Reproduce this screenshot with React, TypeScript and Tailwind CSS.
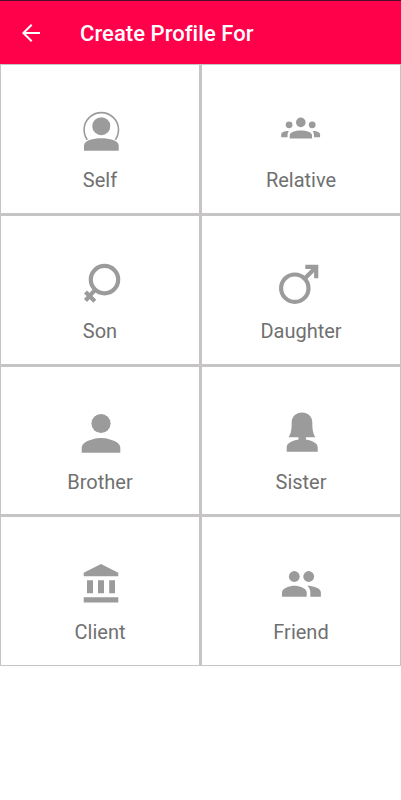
import React from 'react';

const iconProps = {
  className: 'h-10 w-10 overflow-visible text-[#9b9b9b]',
  viewBox: '0 0 40 40',
  fill: 'currentColor',
  'aria-hidden': true,
};

const SelfIcon = () => (
  <svg {...iconProps}>
    <circle cx="21.3" cy="18.8" r="17.2" fill="none" stroke="currentColor" strokeWidth="1.6" />
    <path d="M3 41v-6.500c0-5.800 9-8.400 18.300-8.400s18.400 2.600 18.400 8.400V41z" fill="white" />
    <circle cx="21.3" cy="15.2" r="9" />
    <path d="M4 39.7v-5.2c0-4.8 9-7.2 17.3-7.2s17.4 2.4 17.4 7.2v5.2z" />
  </svg>
);

const RelativeIcon = () => (
  <svg {...iconProps}>
    <circle cx="19.8" cy="11.4" r="4.8" />
    <circle cx="8.1" cy="13.8" r="3.4" />
    <circle cx="31.2" cy="13.8" r="3.4" />
    <path d="M8.7 27.4v-3c0-3.4 5.5-5 11.2-5S31 21 31 24.4v3z" />
    <path d="M.2 26.200v-2.700c0-2 3.200-3.500 7.700-3.400-.9 1.100-1.400 2.500-1.400 6.100z" />
    <path d="M39.100 26.200v-2.700c0-2-3.200-3.500-7.500-3.400.9 1.100 1.400 2.500 1.400 6.100z" />
  </svg>
);

const SonIcon = () => (
  <svg {...iconProps}>
    <g fill="none" stroke="currentColor" strokeWidth="4.2">
      <circle cx="24.5" cy="17.6" r="13.7" />
      <path d="M15.500 27.300L5.500 38.500M5.500 30l9.300 9.200" />
    </g>
  </svg>
);

const DaughterIcon = () => (
  <svg {...iconProps}>
    <g fill="none" stroke="currentColor" strokeWidth="4.2">
      <circle cx="13.8" cy="26.2" r="13.7" />
      <path d="M23.500 16.800L35 5.300M24.300 4.900h10.900v11.400" />
    </g>
  </svg>
);

const BrotherIcon = () => (
  <svg {...iconProps}>
    <circle cx="21" cy="10.5" r="9.6" />
    <path d="M1.700 39.700v-5c0-6.400 12.800-9.700 19.300-9.700s19.300 3.300 19.300 9.700v5z" />
  </svg>
);

const SisterIcon = () => (
  <svg {...iconProps}>
    <path d="M21-.6c-6 0-10.300 4.200-10.300 9.900 0 6.500-.4 10.500-3 14.900h9.800v2.300c-6 1.200-11.800 3.300-11.800 7.800v4.500h31v-4.500c0-4.500-5.800-6.600-11.800-7.800v-2.300h9.400c-2.600-4.400-3-8.400-3-14.900 0-5.700-4.300-9.900-10.300-9.900z" />
  </svg>
);

const ClientIcon = () => (
  <svg {...iconProps}>
    <path d="M3.700 13.300V9.700L21 1l17.300 8.700v3.600zM7 17.300h6v13H7zM18 17.300h6v13h-6zM29.200 17.300h5.800v13h-5.800zM3.700 34.200h34.600v5.200H3.700z" />
  </svg>
);

const FriendIcon = () => (
  <svg {...iconProps}>
    <circle cx="13.3" cy="13.5" r="5.4" />
    <circle cx="27.7" cy="13.5" r="5.4" />
    <path d="M1 33.800v-4.400c0-4.400 7.700-6.700 12.400-6.700s12.300 2.300 12.300 6.700v4.400z" />
    <path d="M26.200 22.800c5.300 0 13.700 2.200 13.700 6.600v4.400H29.300v-4.400c0-3-1.300-5.100-3.100-6.600z" />
  </svg>
);

const profiles = [
  { label: 'Self', Icon: SelfIcon },
  { label: 'Relative', Icon: RelativeIcon },
  { label: 'Son', Icon: SonIcon },
  { label: 'Daughter', Icon: DaughterIcon },
  { label: 'Brother', Icon: BrotherIcon },
  { label: 'Sister', Icon: SisterIcon },
  { label: 'Client', Icon: ClientIcon },
  { label: 'Friend', Icon: FriendIcon },
];

export default function App() {
  return (
    <div className="min-h-screen w-full bg-white font-[Roboto,sans-serif]">
      {/* App bar */}
      <header className="flex h-16 items-center border-t border-[#4d0a2b] bg-[#ff004a] pl-[19px] text-white">
        <button type="button" aria-label="Back" className="flex h-6 w-6 items-center">
          <svg className="h-6 w-6" viewBox="0 0 24 24" fill="none" stroke="currentColor" strokeWidth="2">
            <path d="M21 12H4.500M12.700 3.700L4.400 12l8.300 8.300" />
          </svg>
        </button>
        <h1 className="ml-[37px] pt-0.5 text-[22px] leading-7 font-medium tracking-[0.06px]">
          Create Profile For
        </h1>
      </header>

      {/* Profile options */}
      <main className="grid grid-cols-2 grid-rows-[148px_148px_147px_148px] gap-[3px] bg-[#c6c4c5] p-px">
        {profiles.map(({ label, Icon }) => (
          <button
            key={label}
            type="button"
            className="flex flex-col items-center bg-white pt-[46px]"
          >
            <Icon />
            <span className="mt-[15px] text-xl leading-7 text-[#707070]">{label}</span>
          </button>
        ))}
      </main>
    </div>
  );
}
